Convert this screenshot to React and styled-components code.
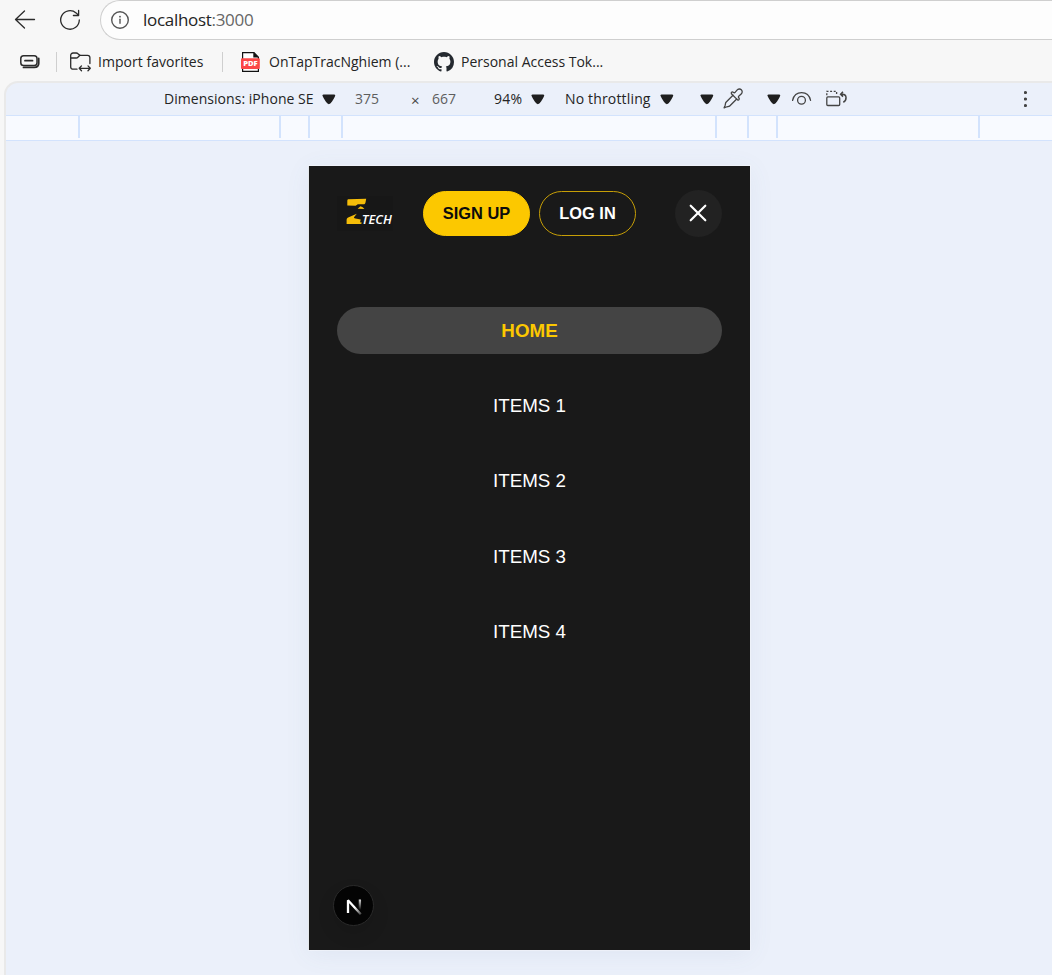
import React from "react";
import styled, { createGlobalStyle } from "styled-components";

const GlobalStyle = createGlobalStyle`
  * { box-sizing: border-box; }
  body { margin: 0; background: #f7f7f7; overflow: hidden; }
  ul { list-style: none; margin: 0; padding: 0; }
  button { font: inherit; margin: 0; padding: 0; border: 0; background: none; color: inherit; }
  svg { display: block; flex: none; }
`;

const Browser = styled.div`
  width: 1052px;
  height: 975px;
  display: flex;
  flex-direction: column;
  overflow: hidden;
  background: #f7f7f7;
  color: #242424;
  font-family: "Open Sans", "Noto Sans", sans-serif;
`;

const NavBar = styled.header`
  height: 40px;
  flex: none;
  display: flex;
  align-items: center;
  padding-left: 14px;
`;

const NavButton = styled.button`
  width: 22px;
  height: 22px;
  margin-right: ${(p) => p.$after}px;
`;

const AddressBar = styled.div`
  flex: 1;
  height: 40px;
  display: flex;
  align-items: center;
  gap: 13px;
  padding: 0 0 1px 9px;
  border: 1px solid #cfcfcf;
  border-right: 0;
  border-radius: 20px 0 0 20px;
  background: #fdfdfd;
`;

const Label = styled.span`
  width: ${(p) => p.$w}px;
  flex: none;
  white-space: nowrap;
  font-size: ${(p) => p.$size || 14}px;
  line-height: 20px;
  letter-spacing: ${(p) => p.$track || 0}px;
  color: ${(p) => p.$color || "#242424"};
`;

const Port = styled.span`
  color: #666;
`;

const FavoritesBar = styled.nav`
  height: 42px;
  flex: none;
  display: flex;
  align-items: center;
  padding: 2px 0 0 19px;
`;

const Divider = styled.span`
  width: 1px;
  height: 20px;
  background: #cfcfcf;
  margin: 0 ${(p) => p.$after}px 0 ${(p) => p.$before}px;
`;

const Favorite = styled.a`
  display: flex;
  align-items: center;
  gap: ${(p) => p.$gap}px;
  margin-right: ${(p) => p.$after || 0}px;
`;

const DevTools = styled.main`
  flex: 1;
  margin-left: 4px;
  display: flex;
  flex-direction: column;
  border: solid #e9e9e9;
  border-width: 2px 0 0 2px;
  border-radius: 14px 0 0 0;
  background: #ebf0fa;
  overflow: hidden;
  margin-top: -1px;
`;

const DeviceToolbar = styled.div`
  height: 32px;
  flex: none;
  display: flex;
  align-items: center;
  padding: 0 0 1px 158px;
`;

const Slot = styled.span`
  width: ${(p) => p.$w}px;
  height: 22px;
  flex: none;
  display: flex;
  align-items: center;
  padding-top: ${(p) => p.$drop || 0}px;
`;

const Ruler = styled.div`
  height: 26px;
  flex: none;
  display: flex;
  border: solid #d3e3fd;
  border-width: 1px 0;
  background: #f8faff;
`;

const RulerStep = styled.span`
  width: ${(p) => p.$w}px;
  height: 22px;
  border-right: 2px solid #d3e3fd;
`;

const Canvas = styled.div`
  flex: 1;
  display: flex;
  align-items: flex-start;
  padding: 25px 0 0 303px;
`;

const Device = styled.section`
  position: relative;
  width: 441px;
  height: 784px;
  padding: 24px 28px 0;
  background: #191919;
  color: #fff;
  font-family: "Liberation Sans", Arial, sans-serif;
  box-shadow: 0 0 0 1px rgba(255, 255, 255, 0.35), -1px 0 0 #d5dadf, 0 4px 24px rgba(90, 110, 150, 0.08);
`;

const AppHeader = styled.div`
  display: flex;
  align-items: center;
  height: 47px;
`;

const Logo = styled.svg`
  width: 56px;
  height: 35px;
  margin-right: 30px;
  background: #171717;
`;

const Pill = styled.button`
  width: ${(p) => p.$w}px;
  height: 45px;
  border-radius: 23px;
  font-size: 16.4px;
  font-weight: 700;
  color: ${(p) => (p.$filled ? "#0c0c0c" : "#fff")};
  background: ${(p) => (p.$filled ? "#fcc800" : "transparent")};
  border: 1px solid ${(p) => (p.$filled ? "#fcc800" : "#c69e06")};
  margin-right: ${(p) => p.$after}px;
`;

const CloseButton = styled.button`
  width: 47px;
  height: 47px;
  border-radius: 50%;
  display: grid;
  place-items: center;
  padding: 0 1px 1px 0;
  background: #222;
`;

const Menu = styled.ul`
  display: flex;
  flex-direction: column;
  gap: 28.2px;
  margin-top: 70px;
`;

const MenuItem = styled.li`
  width: 385px;
  height: 47px;
  border-radius: 24px;
  line-height: ${(p) => (p.$active ? 48 : 47.6)}px;
  text-align: center;
  font-size: 18.8px;
  font-weight: ${(p) => (p.$active ? 700 : 400)};
  color: ${(p) => (p.$active ? "#fcc800" : "#fff")};
  background: ${(p) => (p.$active ? "#444" : "transparent")};
`;

const DevBadge = styled.div`
  position: absolute;
  left: 24px;
  bottom: 24px;
  width: 41px;
  height: 41px;
  border-radius: 50%;
  border: 1px solid #2a2a2a;
  background: #040404;
  display: grid;
  place-items: center;
  box-shadow: 0 8px 18px rgba(0, 0, 0, 0.1);
`;

const Caret = () => (
  <svg width="14" height="12" viewBox="0 0 14 12">
    <path d="M1.500 1.400h10.700c.9 0 1.300.9.9 1.700-.9 2.400-2.400 4.800-4.500 7.200-1 1.100-2.400 1.100-3.400 0C3.100 7.900 1.600 5.500.6 3.100.2 2.300.6 1.400 1.500 1.400z" fill="#1f1f1f" />
  </svg>
);

const BackIcon = () => (
  <svg width="22" height="22" viewBox="0 0 22 22" fill="none" stroke="#2b2b2b" strokeWidth="1.3" strokeLinecap="round" strokeLinejoin="round">
    <path d="M20.500 10.500h-19M10.500 2l-9 8.500 9 8.500" />
  </svg>
);

const ReloadIcon = () => (
  <svg width="22" height="22" viewBox="0 0 22 22" fill="none" stroke="#2b2b2b" strokeWidth="1.3" strokeLinecap="round" strokeLinejoin="round">
    <path d="M20.300 11a9.300 9.300 0 1 1-3.200-7.100L19.500 6.200M19.600 1.500v5h-5.200" />
  </svg>
);

const InfoIcon = () => (
  <svg width="20" height="20" viewBox="0 0 20 20" fill="none" stroke="#555" strokeWidth="1.4" strokeLinecap="round">
    <circle cx="10" cy="10" r="8.300" />
    <path d="M10 9.300v4" />
    <circle cx="10" cy="6.700" r=".9" fill="#555" stroke="none" />
  </svg>
);

const StackIcon = () => (
  <svg width="22" height="16" viewBox="0 0 22 16" fill="none" stroke="#2b2b2b" strokeWidth="1.500" strokeLinecap="round">
    <rect x="1.800" y="1.800" width="16.200" height="9.800" rx="2.800" />
    <path d="M6 6.700h7.500M4.500 13.400h10.700c2.800 0 4.500-1.600 4.500-4.200V4.500" strokeWidth="1.800" />
  </svg>
);

const FolderIcon = () => (
  <svg width="22" height="20" viewBox="0 0 22 20" fill="none" stroke="#2b2b2b" strokeWidth="1.300" strokeLinecap="round" strokeLinejoin="round">
    <path d="M7 17.200H3a2.300 2.300 0 0 1-2.300-2.300V3.300A2.300 2.300 0 0 1 3 1h3.300c.7 0 1.200.2 1.700.7l1.700 1.600h7.900a2.300 2.300 0 0 1 2.300 2.300v6" />
    <path d="M.8 6h5.500c.7 0 1.100-.2 1.600-.7l2-2M9.500 16.300h10.500M11.500 13.900l-2.300 2.400 2.300 2.400M18 13.900l2.300 2.400-2.300 2.400" />
  </svg>
);

const PdfIcon = () => (
  <svg width="20" height="22" viewBox="0 0 20 22">
    <path d="M1.600 1.600h11.400l4.400 4.600v14.200H1.600z" fill="#fff" stroke="#111" strokeWidth="1.200" />
    <path d="M12.300 1l5.700 5.500h-5.700z" fill="#111" />
    <rect x="0" y="7.200" width="18.800" height="10.800" rx="1" fill="#fb4747" />
    <text x="9.400" y="15.200" textAnchor="middle" textLength="14.500" lengthAdjust="spacingAndGlyphs" fontFamily="Open Sans, sans-serif" fontSize="7.200" fontWeight="800" fill="#fff">PDF</text>
  </svg>
);

const GithubIcon = () => (
  <svg width="20" height="20" viewBox="0 0 16 16" fill="#24292f">
    <path d="M8 0C3.580 0 0 3.580 0 8c0 3.540 2.290 6.530 5.470 7.590.4.070.55-.17.55-.38 0-.19-.01-.82-.01-1.490-2.010.37-2.530-.49-2.690-.94-.09-.23-.48-.94-.82-1.130-.28-.15-.68-.52-.01-.53.63-.01 1.080.58 1.230.82.72 1.210 1.870.87 2.330.66.07-.52.28-.87.51-1.070-1.780-.2-3.640-.89-3.640-3.950 0-.87.31-1.590.82-2.150-.08-.2-.36-1.020.08-2.120 0 0 .67-.21 2.200.82.64-.18 1.320-.27 2-.27s1.360.09 2 .27c1.530-1.040 2.200-.82 2.200-.82.44 1.100.16 1.920.08 2.120.51.56.82 1.270.82 2.150 0 3.070-1.870 3.750-3.650 3.950.29.25.54.73.54 1.480 0 1.070-.01 1.930-.01 2.200 0 .21.15.46.55.38A8.010 8.010 0 0 0 16 8c0-4.420-3.580-8-8-8z" />
  </svg>
);

const DropperIcon = () => (
  <svg width="21" height="21" viewBox="0 0 21 21" fill="none" stroke="#444" strokeWidth="1.300" strokeLinejoin="round" strokeLinecap="round">
    <path d="M10 7.200L3 14.200c-.7.700-.5 2.200-1 3.500L1.100 19.800l2.200-.8c1.300-.4 2.700-.3 3.400-1l7-7" />
    <path d="M8.400 5.700c-.6-1.500 1-2.300 2.100-1.300.5.500 1.100.5 1.600-.1l1.900-2.200c1.100-1.300 3.100-1.500 4.300-.4s1.200 3.100-.1 4.300l-2.300 2.100c-.6.500-.6 1.100-.1 1.700 1 1.100.2 2.700-1.300 2.100z" />
  </svg>
);

const EyeIcon = () => (
  <svg width="20" height="14" viewBox="0 0 20 14" fill="none" stroke="#444" strokeWidth="1.300" strokeLinecap="round">
    <path d="M.6 8.300C3-1.900 16.200-1.900 18.600 8.300" />
    <circle cx="9.500" cy="8.300" r="3.900" />
  </svg>
);

const RotateIcon = () => (
  <svg width="22" height="17" viewBox="0 0 22 17" fill="none" stroke="#444" strokeWidth="1.300">
    <rect x=".8" y="6.900" width="12.900" height="8.600" rx="1" />
    <path d="M.8 5.200V1.300h9.800v3.900" strokeDasharray="2 1.600" />
    <path d="M14.900 4.200h1.500c4.800 0 4.600 6.300.9 8M17 1.800l-2.400 2.400 2.400 2.400" strokeWidth="1.500" />
  </svg>
);

const MoreIcon = () => (
  <svg width="4" height="18" viewBox="0 0 4 18" fill="#444">
    <circle cx="1.500" cy="2.500" r="1.600" />
    <circle cx="1.500" cy="9" r="1.600" />
    <circle cx="1.500" cy="15.500" r="1.600" />
  </svg>
);

const BrandLogo = () => (
  <Logo viewBox="0 0 56 35">
    <path d="M11 3.200l18.200-.4-.7 3.700c-.3 1.300-1 1.800-2.200 1.800h-5.500l-2.200 1.500-8.300-.2V5.100c0-1 .3-1.500.7-1.900z" fill="#f5bd09" />
    <path d="M23.500 10.300l2.200.9 1.700 1.700-6.800-.2z" fill="#f5bd09" />
    <path d="M19.800 17.700l-2.600 3.400c-.6 1 .1 1.400 1.200 1.500l5.300.8-.6 2.800 1.900.6c-.3.900-1 1.300-2 1.300H9.600v-4c0-1.200.5-1.900 1.500-2.500z" fill="#f5bd09" />
    <text x="24.800" y="28.200" textLength="30" lengthAdjust="spacingAndGlyphs" fontFamily="Open Sans, sans-serif" fontSize="12.800" fontStyle="italic" fontWeight="600" fill="#fff">TECH</text>
  </Logo>
);

const CloseIcon = () => (
  <svg width="18" height="18" viewBox="0 0 18 18" stroke="#fff" strokeWidth="2.200" strokeLinecap="round">
    <path d="M1.700 1.700l14.600 14.600M16.300 1.700L1.700 16.300" />
  </svg>
);

const NextIcon = () => (
  <svg width="18" height="18" viewBox="0 0 18 18" fill="none" strokeWidth="2.300">
    <defs>
      <linearGradient id="stem" x1="0" y1="2" x2="0" y2="13" gradientUnits="userSpaceOnUse">
        <stop stopColor="#fff" stopOpacity=".9" />
        <stop offset="1" stopColor="#fff" stopOpacity="0" />
      </linearGradient>
      <linearGradient id="slash" x1="10" y1="10" x2="17" y2="18" gradientUnits="userSpaceOnUse">
        <stop stopColor="#fff" />
        <stop offset="1" stopColor="#fff" stopOpacity="0.150" />
      </linearGradient>
    </defs>
    <path d="M3 16V3.200L15.800 17.200" stroke="url(#slash)" strokeLinejoin="bevel" />
    <path d="M14.900 2.500v11" stroke="url(#stem)" />
  </svg>
);

const rulerSteps = [74, 201, 29, 33, 374, 32, 29, 202];
const menu = ["HOME", "ITEMS 1", "ITEMS 2", "ITEMS 3", "ITEMS 4"];

export default function App() {
  return (
    <Browser>
      <GlobalStyle />
      <NavBar>
        <NavButton $after={23} aria-label="Back"><BackIcon /></NavButton>
        <NavButton $after={19} aria-label="Reload"><ReloadIcon /></NavButton>
        <AddressBar>
          <InfoIcon />
          <Label $w={300} $size={17} $track={-0.3}>localhost<Port>:3000</Port></Label>
        </AddressBar>
      </NavBar>
      <FavoritesBar>
        <StackIcon />
        <Divider $before={15} $after={13} />
        <Favorite $gap={6}><FolderIcon /><Label $w={124} $track={0.03}>Import favorites</Label></Favorite>
        <Divider $before={0} $after={18} />
        <Favorite $gap={8} $after={23}><PdfIcon /><Label $w={142}>OnTapTracNghiem (...</Label></Favorite>
        <Favorite $gap={7}><GithubIcon /><Label $w={150}>Personal Access Tok...</Label></Favorite>
      </FavoritesBar>
      <DevTools>
        <DeviceToolbar>
          <Label $w={157.5} $track={0.04}>Dimensions: iPhone SE</Label>
          <Slot $w={33.5} $drop={1}><Caret /></Slot>
          <Label $w={56} $color="#5e5e5e">375</Label>
          <Slot $w={21} $drop={2}><Label $w={21} $size={15} $color="#474747">×</Label></Slot>
          <Label $w={62} $color="#5e5e5e">667</Label>
          <Label $w={36.5} $track={0.2}>94%</Label>
          <Slot $w={34.5} $drop={1}><Caret /></Slot>
          <Label $w={94.5} $track={0.16}>No throttling</Label>
          <Slot $w={40} $drop={1}><Caret /></Slot>
          <Slot $w={23.5} $drop={1}><Caret /></Slot>
          <Slot $w={43.5}><DropperIcon /></Slot>
          <Slot $w={25} $drop={1}><Caret /></Slot>
          <Slot $w={34}><EyeIcon /></Slot>
          <Slot $w={198}><RotateIcon /></Slot>
          <MoreIcon />
        </DeviceToolbar>
        <Ruler>
          {rulerSteps.map((w, i) => <RulerStep key={i} $w={w} />)}
        </Ruler>
        <Canvas>
          <Device>
            <AppHeader>
              <BrandLogo />
              <Pill $w={107} $after={9} $filled>SIGN UP</Pill>
              <Pill $w={97} $after={39}>LOG IN</Pill>
              <CloseButton aria-label="Close menu"><CloseIcon /></CloseButton>
            </AppHeader>
            <Menu>
              {menu.map((item, i) => <MenuItem key={item} $active={i === 0}>{item}</MenuItem>)}
            </Menu>
            <DevBadge><NextIcon /></DevBadge>
          </Device>
        </Canvas>
      </DevTools>
    </Browser>
  );
}
